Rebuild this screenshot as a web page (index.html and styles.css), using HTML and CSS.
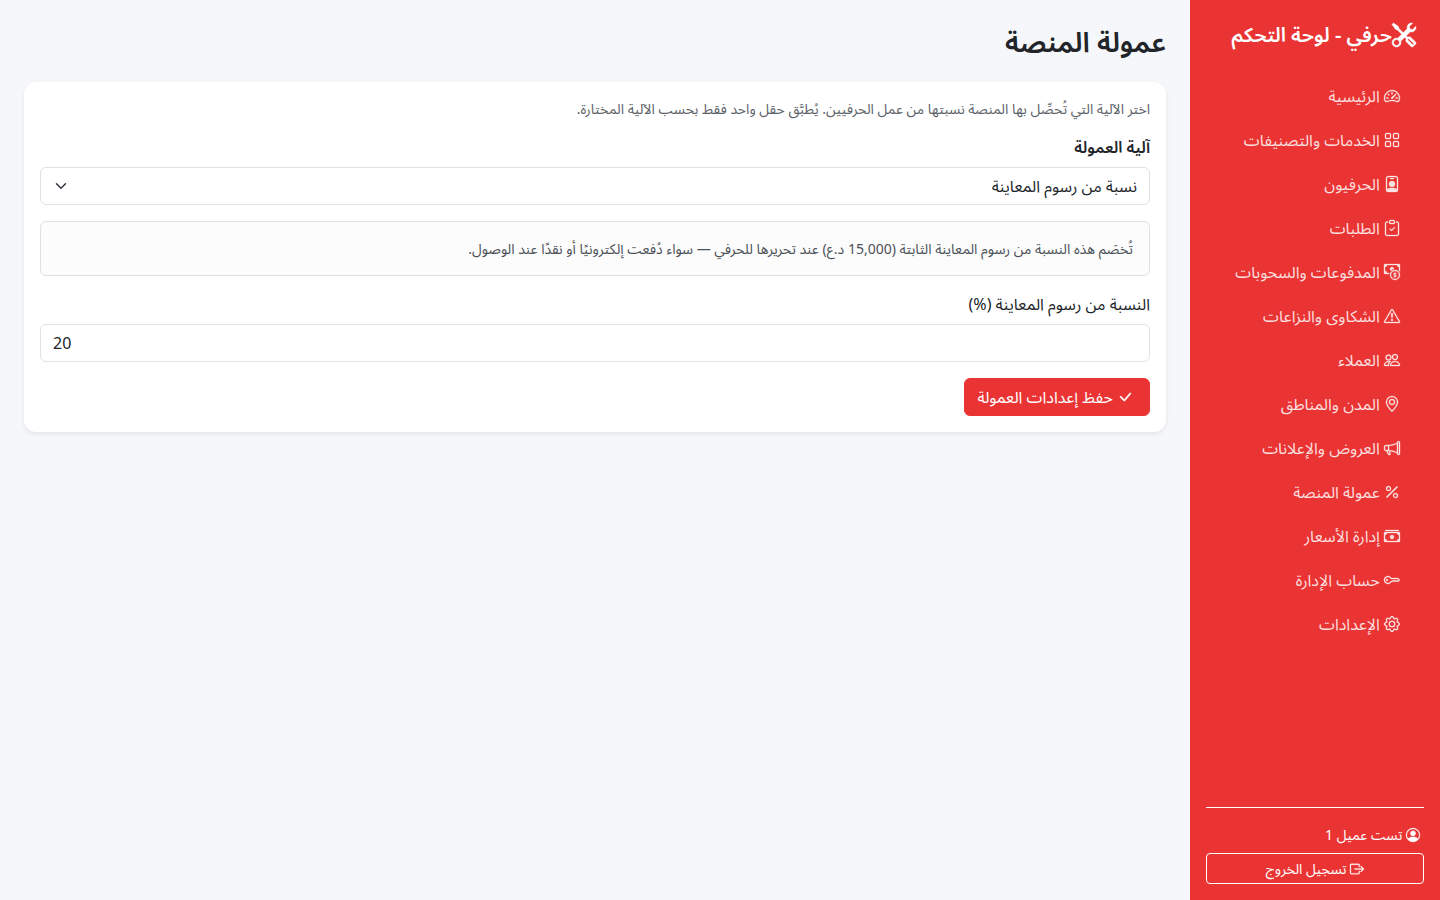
FILE: index.html
```
<!DOCTYPE html>
<html lang="ar" dir="rtl">
<head>
    <meta charset="UTF-8">
    <meta name="viewport" content="width=device-width, initial-scale=1.0">
    <title>عمولة المنصة</title>
    <link rel="stylesheet" href="styles.css">
</head>
<body>
    <div class="layout">
        <!-- Sidebar -->
        <aside class="sidebar">
            <div class="brand">
                <svg class="icon" viewBox="0 0 16 16"><path d="M1 0 0 1l2.2 3.081a1 1 0 0 0 .815.419h.07a1 1 0 0 1 .708.293l2.675 2.675-2.617 2.654A3.003 3.003 0 0 0 0 13a3 3 0 1 0 5.878-.851l2.654-2.617.968.968-.305.914a1 1 0 0 0 .242 1.023l3.27 3.27a.997.997 0 0 0 1.414 0l1.586-1.586a.997.997 0 0 0 0-1.414l-3.27-3.27a1 1 0 0 0-1.023-.242L10.5 9.5l-.96-.96 2.68-2.643A3.005 3.005 0 0 0 16 3q0-.405-.102-.777l-2.14 2.141L12 4l-.364-1.757L13.777.102a3 3 0 0 0-3.675 3.68L7.462 6.46 4.793 3.793a1 1 0 0 1-.293-.707v-.071a1 1 0 0 0-.419-.814zm9.646 10.646a.5.5 0 0 1 .708 0l2.914 2.915a.5.5 0 0 1-.707.707l-2.915-2.914a.5.5 0 0 1 0-.708M3 11l.471.242.529.026.287.445.445.287.026.529L5 13l-.242.471-.026.529-.445.287-.287.445-.529.026L3 15l-.471-.242L2 14.732l-.287-.445L1.268 14l-.026-.529L1 13l.242-.471.026-.529.445-.287.287-.445.529-.026z"/></svg><span>حرفي - لوحة التحكم</span>
            </div>
            <nav class="nav">
                <a class="nav-link" href="#"><svg class="icon" viewBox="0 0 16 16"><path d="M8 4a.5.5 0 0 1 .5.5V6a.5.5 0 0 1-1 0V4.5A.5.5 0 0 1 8 4M3.732 5.732a.5.5 0 0 1 .707 0l.915.914a.5.5 0 1 1-.708.708l-.914-.915a.5.5 0 0 1 0-.707M2 10a.5.5 0 0 1 .5-.5h1.586a.5.5 0 0 1 0 1H2.5A.5.5 0 0 1 2 10m9.5 0a.5.5 0 0 1 .5-.5h1.5a.5.5 0 0 1 0 1H12a.5.5 0 0 1-.5-.5m.754-4.246a.39.39 0 0 0-.527-.02L7.547 9.31a.91.91 0 1 0 1.302 1.258l3.434-4.297a.39.39 0 0 0-.029-.518z"/><path fill-rule="evenodd" d="M0 10a8 8 0 1 1 15.547 2.661c-.442 1.253-1.845 1.602-2.932 1.25C11.309 13.488 9.475 13 8 13c-1.474 0-3.31.488-4.615.911-1.087.352-2.49.003-2.932-1.25A8 8 0 0 1 0 10m8-7a7 7 0 0 0-6.603 9.329c.203.575.923.876 1.68.63C4.397 12.533 6.358 12 8 12s3.604.532 4.923.96c.757.245 1.477-.056 1.68-.631A7 7 0 0 0 8 3"/></svg> الرئيسية</a>
                <a class="nav-link" href="#"><svg class="icon" viewBox="0 0 16 16"><path d="M1 2.5A1.5 1.5 0 0 1 2.5 1h3A1.5 1.5 0 0 1 7 2.5v3A1.5 1.5 0 0 1 5.5 7h-3A1.5 1.5 0 0 1 1 5.5zM2.5 2a.5.5 0 0 0-.5.5v3a.5.5 0 0 0 .5.5h3a.5.5 0 0 0 .5-.5v-3a.5.5 0 0 0-.5-.5zm6.5.5A1.5 1.5 0 0 1 10.5 1h3A1.5 1.5 0 0 1 15 2.5v3A1.5 1.5 0 0 1 13.5 7h-3A1.5 1.5 0 0 1 9 5.5zm1.5-.5a.5.5 0 0 0-.5.5v3a.5.5 0 0 0 .5.5h3a.5.5 0 0 0 .5-.5v-3a.5.5 0 0 0-.5-.5zM1 10.5A1.5 1.5 0 0 1 2.5 9h3A1.5 1.5 0 0 1 7 10.5v3A1.5 1.5 0 0 1 5.5 15h-3A1.5 1.5 0 0 1 1 13.5zm1.5-.5a.5.5 0 0 0-.5.5v3a.5.5 0 0 0 .5.5h3a.5.5 0 0 0 .5-.5v-3a.5.5 0 0 0-.5-.5zm6.5.5A1.5 1.5 0 0 1 10.5 9h3a1.5 1.5 0 0 1 1.5 1.5v3a1.5 1.5 0 0 1-1.5 1.5h-3A1.5 1.5 0 0 1 9 13.5zm1.5-.5a.5.5 0 0 0-.5.5v3a.5.5 0 0 0 .5.5h3a.5.5 0 0 0 .5-.5v-3a.5.5 0 0 0-.5-.5z"/></svg> الخدمات والتصنيفات</a>
                <a class="nav-link" href="#"><svg class="icon" viewBox="0 0 16 16"><path d="M6.5 2a.5.5 0 0 0 0 1h3a.5.5 0 0 0 0-1zM11 8a3 3 0 1 1-6 0 3 3 0 0 1 6 0"/><path d="M4.5 0A2.5 2.5 0 0 0 2 2.5V14a2 2 0 0 0 2 2h8a2 2 0 0 0 2-2V2.5A2.5 2.5 0 0 0 11.5 0zM3 2.5A1.5 1.5 0 0 1 4.5 1h7A1.5 1.5 0 0 1 13 2.5v10.795a4.2 4.2 0 0 0-.776-.492C11.392 12.387 10.063 12 8 12s-3.392.387-4.224.803a4.2 4.2 0 0 0-.776.492z"/></svg> الحرفيون</a>
                <a class="nav-link" href="#"><svg class="icon" viewBox="0 0 16 16"><path fill-rule="evenodd" d="M10.854 7.146a.5.5 0 0 1 0 .708l-3 3a.5.5 0 0 1-.708 0l-1.5-1.5a.5.5 0 1 1 .708-.708L7.5 9.793l2.646-2.647a.5.5 0 0 1 .708 0"/><path d="M4 1.5H3a2 2 0 0 0-2 2V14a2 2 0 0 0 2 2h10a2 2 0 0 0 2-2V3.5a2 2 0 0 0-2-2h-1v1h1a1 1 0 0 1 1 1V14a1 1 0 0 1-1 1H3a1 1 0 0 1-1-1V3.5a1 1 0 0 1 1-1h1z"/><path d="M9.5 1a.5.5 0 0 1 .5.5v1a.5.5 0 0 1-.5.5h-3a.5.5 0 0 1-.5-.5v-1a.5.5 0 0 1 .5-.5zm-3-1A1.5 1.5 0 0 0 5 1.5v1A1.5 1.5 0 0 0 6.5 4h3A1.5 1.5 0 0 0 11 2.5v-1A1.5 1.5 0 0 0 9.5 0z"/></svg> الطلبات</a>
                <a class="nav-link" href="#"><svg class="icon" viewBox="0 0 16 16"><path fill-rule="evenodd" d="M11 15a4 4 0 1 0 0-8 4 4 0 0 0 0 8m5-4a5 5 0 1 1-10 0 5 5 0 0 1 10 0"/><path d="M9.438 11.944c.047.596.518 1.06 1.363 1.116v.44h.375v-.443c.875-.061 1.386-.529 1.386-1.207 0-.618-.39-.936-1.09-1.1l-.296-.07v-1.2c.376.043.614.248.671.532h.658c-.047-.575-.54-1.024-1.329-1.073V8.5h-.375v.45c-.747.073-1.255.522-1.255 1.158 0 .562.378.92 1.007 1.066l.248.061v1.272c-.384-.058-.639-.27-.696-.563h-.668zm1.36-1.354c-.369-.085-.569-.26-.569-.522 0-.294.216-.514.572-.578v1.1zm.432.746c.449.104.655.272.655.569 0 .339-.257.571-.709.614v-1.195z"/><path d="M1 0a1 1 0 0 0-1 1v8a1 1 0 0 0 1 1h4.083q.088-.517.258-1H3a2 2 0 0 0-2-2V3a2 2 0 0 0 2-2h10a2 2 0 0 0 2 2v3.528c.38.34.717.728 1 1.154V1a1 1 0 0 0-1-1z"/><path d="M9.998 5.083 10 5a2 2 0 1 0-3.132 1.65 6 6 0 0 1 3.13-1.567"/></svg> المدفوعات والسحوبات</a>
                <a class="nav-link" href="#"><svg class="icon" viewBox="0 0 16 16"><path d="M7.938 2.016A.13.13 0 0 1 8.002 2a.13.13 0 0 1 .063.016.15.15 0 0 1 .054.057l6.857 11.667c.036.06.035.124.002.183a.2.2 0 0 1-.054.06.1.1 0 0 1-.066.017H1.146a.1.1 0 0 1-.066-.017.2.2 0 0 1-.054-.06.18.18 0 0 1 .002-.183L7.884 2.073a.15.15 0 0 1 .054-.057m1.044-.45a1.13 1.13 0 0 0-1.96 0L.165 13.233c-.457.778.091 1.767.98 1.767h13.713c.889 0 1.438-.99.98-1.767z"/><path d="M7.002 12a1 1 0 1 1 2 0 1 1 0 0 1-2 0M7.1 5.995a.905.905 0 1 1 1.8 0l-.35 3.507a.552.552 0 0 1-1.1 0z"/></svg> الشكاوى والنزاعات</a>
                <a class="nav-link" href="#"><svg class="icon" viewBox="0 0 16 16"><path d="M15 14s1 0 1-1-1-4-5-4-5 3-5 4 1 1 1 1zm-7.978-1L7 12.996c.001-.264.167-1.03.76-1.72C8.312 10.629 9.282 10 11 10c1.717 0 2.687.63 3.24 1.276.593.69.758 1.457.76 1.72l-.008.002-.014.002zM11 7a2 2 0 1 0 0-4 2 2 0 0 0 0 4m3-2a3 3 0 1 1-6 0 3 3 0 0 1 6 0M6.936 9.28a6 6 0 0 0-1.23-.247A7 7 0 0 0 5 9c-4 0-5 3-5 4q0 1 1 1h4.216A2.24 2.24 0 0 1 5 13c0-1.01.377-2.042 1.09-2.904.243-.294.526-.569.846-.816M4.92 10A5.5 5.5 0 0 0 4 13H1c0-.26.164-1.03.76-1.724.545-.636 1.492-1.256 3.16-1.275zM1.5 5.5a3 3 0 1 1 6 0 3 3 0 0 1-6 0m3-2a2 2 0 1 0 0 4 2 2 0 0 0 0-4"/></svg> العملاء</a>
                <a class="nav-link" href="#"><svg class="icon" viewBox="0 0 16 16"><path d="M12.166 8.94c-.524 1.062-1.234 2.12-1.96 3.07A32 32 0 0 1 8 14.58a32 32 0 0 1-2.206-2.57c-.726-.95-1.436-2.008-1.96-3.07C3.304 7.867 3 6.862 3 6a5 5 0 0 1 10 0c0 .862-.305 1.867-.834 2.94M8 16s6-5.686 6-10A6 6 0 0 0 2 6c0 4.314 6 10 6 10"/><path d="M8 8a2 2 0 1 1 0-4 2 2 0 0 1 0 4m0 1a3 3 0 1 0 0-6 3 3 0 0 0 0 6"/></svg> المدن والمناطق</a>
                <a class="nav-link" href="#"><svg class="icon" viewBox="0 0 16 16"><path d="M13 2.5a1.5 1.5 0 0 1 3 0v11a1.5 1.5 0 0 1-3 0v-.214c-2.162-1.241-4.49-1.843-6.912-2.083l.405 2.712A1 1 0 0 1 5.51 15.1h-.548a1 1 0 0 1-.916-.599l-1.85-3.49-.202-.003A2.014 2.014 0 0 1 0 9V7a2.02 2.02 0 0 1 1.992-2.013 75 75 0 0 0 2.483-.075c3.043-.154 6.148-.849 8.525-2.199zm1 0v11a.5.5 0 0 0 1 0v-11a.5.5 0 0 0-1 0m-1 1.35c-2.344 1.205-5.209 1.842-8 2.033v4.233q.27.015.537.036c2.568.189 5.093.744 7.463 1.993zm-9 6.215v-4.13a95 95 0 0 1-1.992.052A1.02 1.02 0 0 0 1 7v2c0 .55.448 1.002 1.006 1.009A61 61 0 0 1 4 10.065m-.657.975 1.609 3.037.01.024h.548l-.002-.014-.443-2.966a68 68 0 0 0-1.722-.082z"/></svg> العروض والإعلانات</a>
                <a class="nav-link" href="#"><svg class="icon" viewBox="0 0 16 16"><path d="M13.442 2.558a.625.625 0 0 1 0 .884l-10 10a.625.625 0 1 1-.884-.884l10-10a.625.625 0 0 1 .884 0M4.5 6a1.5 1.5 0 1 1 0-3 1.5 1.5 0 0 1 0 3m0 1a2.5 2.5 0 1 0 0-5 2.5 2.5 0 0 0 0 5m7 6a1.5 1.5 0 1 1 0-3 1.5 1.5 0 0 1 0 3m0 1a2.5 2.5 0 1 0 0-5 2.5 2.5 0 0 0 0 5"/></svg> عمولة المنصة</a>
                <a class="nav-link" href="#"><svg class="icon" viewBox="0 0 16 16"><path d="M1 3a1 1 0 0 1 1-1h12a1 1 0 0 1 1 1zm7 8a2 2 0 1 0 0-4 2 2 0 0 0 0 4"/><path d="M0 5a1 1 0 0 1 1-1h14a1 1 0 0 1 1 1v8a1 1 0 0 1-1 1H1a1 1 0 0 1-1-1zm3 0a2 2 0 0 1-2 2v4a2 2 0 0 1 2 2h10a2 2 0 0 1 2-2V7a2 2 0 0 1-2-2z"/></svg> إدارة الأسعار</a>
                <a class="nav-link" href="#"><svg class="icon" viewBox="0 0 16 16"><path d="M0 8a4 4 0 0 1 7.465-2H14a.5.5 0 0 1 .354.146l1.5 1.5a.5.5 0 0 1 0 .708l-1.5 1.5a.5.5 0 0 1-.708 0L13 9.207l-.646.647a.5.5 0 0 1-.708 0L11 9.207l-.646.647a.5.5 0 0 1-.708 0L9 9.207l-.646.647A.5.5 0 0 1 8 10h-.535A4 4 0 0 1 0 8m4-3a3 3 0 1 0 2.712 4.285A.5.5 0 0 1 7.163 9h.63l.853-.854a.5.5 0 0 1 .708 0l.646.647.646-.647a.5.5 0 0 1 .708 0l.646.647.646-.647a.5.5 0 0 1 .708 0l.646.647.793-.793-1-1h-6.63a.5.5 0 0 1-.451-.285A3 3 0 0 0 4 5"/><path d="M4 8a1 1 0 1 1-2 0 1 1 0 0 1 2 0"/></svg> حساب الإدارة</a>
                <a class="nav-link" href="#"><svg class="icon" viewBox="0 0 16 16"><path d="M8 4.754a3.246 3.246 0 1 0 0 6.492 3.246 3.246 0 0 0 0-6.492M5.754 8a2.246 2.246 0 1 1 4.492 0 2.246 2.246 0 0 1-4.492 0"/><path d="M9.796 1.343c-.527-1.79-3.065-1.79-3.592 0l-.094.319a.873.873 0 0 1-1.255.52l-.292-.16c-1.64-.892-3.433.902-2.54 2.541l.159.292a.873.873 0 0 1-.52 1.255l-.319.094c-1.79.527-1.79 3.065 0 3.592l.319.094a.873.873 0 0 1 .52 1.255l-.16.292c-.892 1.64.901 3.434 2.541 2.54l.292-.159a.873.873 0 0 1 1.255.52l.094.319c.527 1.79 3.065 1.79 3.592 0l.094-.319a.873.873 0 0 1 1.255-.52l.292.16c1.64.893 3.434-.902 2.54-2.541l-.159-.292a.873.873 0 0 1 .52-1.255l.319-.094c1.79-.527 1.79-3.065 0-3.592l-.319-.094a.873.873 0 0 1-.52-1.255l.16-.292c.893-1.64-.902-3.433-2.541-2.54l-.292.159a.873.873 0 0 1-1.255-.52zm-2.633.283c.246-.835 1.428-.835 1.674 0l.094.319a1.873 1.873 0 0 0 2.693 1.115l.291-.16c.764-.415 1.6.42 1.184 1.185l-.159.292a1.873 1.873 0 0 0 1.116 2.692l.318.094c.835.246.835 1.428 0 1.674l-.319.094a1.873 1.873 0 0 0-1.115 2.693l.16.291c.415.764-.42 1.6-1.185 1.184l-.291-.159a1.873 1.873 0 0 0-2.693 1.116l-.094.318c-.246.835-1.428.835-1.674 0l-.094-.319a1.873 1.873 0 0 0-2.692-1.115l-.292.16c-.764.415-1.6-.42-1.184-1.185l.159-.291A1.873 1.873 0 0 0 1.945 8.93l-.319-.094c-.835-.246-.835-1.428 0-1.674l.319-.094A1.873 1.873 0 0 0 3.06 4.377l-.16-.292c-.415-.764.42-1.6 1.185-1.184l.292.159a1.873 1.873 0 0 0 2.692-1.115z"/></svg> الإعدادات</a>
            </nav>
            <div class="sidebar-footer">
                <div class="user"><svg class="icon" viewBox="0 0 16 16"><path d="M11 6a3 3 0 1 1-6 0 3 3 0 0 1 6 0"/><path fill-rule="evenodd" d="M0 8a8 8 0 1 1 16 0A8 8 0 0 1 0 8m8-7a7 7 0 0 0-5.468 11.37C3.242 11.226 4.805 10 8 10s4.757 1.225 5.468 2.37A7 7 0 0 0 8 1"/></svg> تست عميل 1</div>
                <button type="button" class="btn btn-logout"><svg class="icon" viewBox="0 0 16 16"><path fill-rule="evenodd" d="M10 12.5a.5.5 0 0 1-.5.5h-8a.5.5 0 0 1-.5-.5v-9a.5.5 0 0 1 .5-.5h8a.5.5 0 0 1 .5.5v2a.5.5 0 0 0 1 0v-2A1.5 1.5 0 0 0 9.5 2h-8A1.5 1.5 0 0 0 0 3.5v9A1.5 1.5 0 0 0 1.5 14h8a1.5 1.5 0 0 0 1.5-1.5v-2a.5.5 0 0 0-1 0z"/><path fill-rule="evenodd" d="M15.854 8.354a.5.5 0 0 0 0-.708l-3-3a.5.5 0 0 0-.708.708L14.293 7.5H5.5a.5.5 0 0 0 0 1h8.793l-2.147 2.146a.5.5 0 0 0 .708.708z"/></svg> تسجيل الخروج</button>
            </div>
        </aside>

        <!-- Main Content -->
        <main class="main-content">
            <h1>عمولة المنصة</h1>
            <form class="card">
                <p class="intro">اختر الآلية التي تُحصِّل بها المنصة نسبتها من عمل الحرفيين. يُطبَّق حقل واحد فقط بحسب الآلية المختارة.</p>

                <label class="label-bold" for="commissionType">آلية العمولة</label>
                <select id="commissionType" class="field">
                    <option>نسبة من رسوم المعاينة</option>
                </select>

                <div class="note">تُخصَم هذه النسبة من رسوم المعاينة الثابتة (15,000 د.ع) عند تحريرها للحرفي — سواء دُفعت إلكترونيًا أو نقدًا عند الوصول.</div>

                <label for="commissionRate">النسبة من رسوم المعاينة (%)</label>
                <input id="commissionRate" class="field" type="text" inputmode="decimal" dir="ltr" value="20">

                <button type="button" class="btn btn-save"><svg class="icon" viewBox="0 0 16 16"><path d="M12.736 3.97a.733.733 0 0 1 1.047 0c.286.289.29.756.01 1.05L7.88 12.01a.733.733 0 0 1-1.065.02L3.217 8.384a.757.757 0 0 1 0-1.06.733.733 0 0 1 1.047 0l3.052 3.093 5.4-6.425z"/></svg> حفظ إعدادات العمولة</button>
            </form>
        </main>
    </div>
</body>
</html>
```
FILE: styles.css
```
* {
    box-sizing: border-box;
}
body {
    margin: 0;
    background-color: #f5f7fb;
    color: #212529;
    font-family: "Segoe UI", "Noto Sans", "Noto Sans Arabic", "DejaVu Sans", sans-serif;
    font-size: 16px;
    line-height: 24px;
}
.layout {
    display: flex;
    min-height: 100vh;
}
.icon {
    width: 1em;
    height: 1em;
    fill: currentColor;
    stroke: currentColor;
    stroke-width: 0.3;
    overflow: visible;
    vertical-align: -2px;
}

/* Sidebar */
.sidebar {
    display: flex;
    flex-direction: column;
    flex: 0 0 250px;
    background-color: #ea3434;
    color: #fff;
}
.brand {
    display: flex;
    align-items: center;
    padding: 20px 24px;
    font-size: 20px;
    font-weight: 600;
    line-height: 30px;
    white-space: nowrap;
}
.brand .icon {
    flex: none;
    width: 24px;
    height: 24px;
}
.nav {
    display: flex;
    flex-direction: column;
    padding: 4px 16px;
}
.nav-link {
    padding: 10px 24px;
    color: rgba(255, 255, 255, 0.85);
    text-decoration: none;
    white-space: nowrap;
}
.sidebar-footer {
    margin: auto 16px 16px;
    padding-top: 16px;
    border-top: 1px solid #fff;
    font-size: 14px;
    line-height: 21px;
}
.user {
    padding: 0 4px;
    margin-bottom: 8px;
}

/* Main content */
.main-content {
    flex: 1;
    min-width: 0;
    padding: 24px;
}
h1 {
    margin: 0 0 24px;
    font-size: 28px;
    font-weight: 600;
    line-height: 34px;
}
.card {
    padding: 16px;
    background-color: #fff;
    border-radius: 12px;
    box-shadow: 0 2px 4px rgba(0, 0, 0, 0.08);
}
.intro {
    margin: 0 0 16px;
    color: #5c6268;
    font-size: 14px;
    line-height: 21px;
}
label {
    display: block;
    margin-bottom: 8px;
}
.label-bold {
    font-weight: 600;
}
.field {
    display: block;
    width: 100%;
    height: 38px;
    margin-bottom: 16px;
    padding: 0 12px;
    border: 1px solid #dee2e6;
    border-radius: 6px;
    background-color: #fff;
    color: #212529;
    font: inherit;
}
select.field {
    appearance: none;
    background-image: url("data:image/svg+xml,%3Csvg xmlns='http://www.w3.org/2000/svg' viewBox='0 0 16 16'%3E%3Cpath fill='none' stroke='%23343a40' stroke-linecap='round' stroke-linejoin='round' stroke-width='2' d='m2 5 6 6 6-6'/%3E%3C/svg%3E");
    background-repeat: no-repeat;
    background-position: left 12px center;
    background-size: 16px 12px;
}
.note {
    margin-bottom: 16px;
    padding: 16px;
    border: 1px solid #dee2e6;
    border-radius: 6px;
    background-color: #fcfcfd;
    color: #4b5157;
    font-size: 14px;
    line-height: 21px;
}

/* Buttons */
.btn {
    color: #fff;
    font: inherit;
    cursor: pointer;
}
.btn-save {
    display: block;
    height: 38px;
    padding: 0 12px;
    border: 1px solid #ea3434;
    border-radius: 6px;
    background-color: #ea3434;
}
.btn-save .icon {
    margin-right: 4px;
}
.btn-logout {
    width: 100%;
    height: 31px;
    border: 1px solid #fff;
    border-radius: 4px;
    background-color: transparent;
}
```
